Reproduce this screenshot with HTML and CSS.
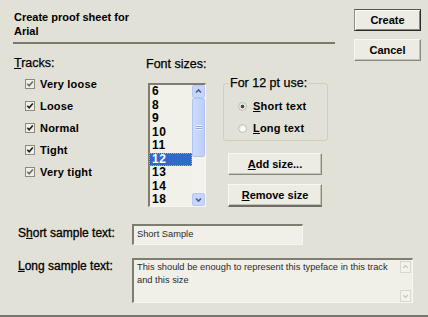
FILE: index.html
```html
<!DOCTYPE html>
<html>
<head>
<meta charset="utf-8">
<link rel="stylesheet" href="styles.css">
</head>
<body>
<div class="dialog">
  <div class="top">
    <div class="title-area">
      <div class="title">Create proof sheet for</div>
      <div class="title">Arial</div>
      <div class="sep"></div>
    </div>
    <div class="buttons">
      <button class="btn default">Create</button>
      <button class="btn">Cancel</button>
    </div>
  </div>

  <div class="main">
    <div class="col tracks">
      <div class="label"><u>T</u>racks:</div>
      <div class="checks">
        <div class="check"><span class="box light"><svg viewBox="0 0 8 8"><polyline points="1.3,3.8 3.2,5.8 6.8,1.6"/></svg></span>Very loose</div>
        <div class="check"><span class="box"><svg viewBox="0 0 8 8"><polyline points="1.3,3.8 3.2,5.8 6.8,1.6"/></svg></span>Loose</div>
        <div class="check"><span class="box"><svg viewBox="0 0 8 8"><polyline points="1.3,3.8 3.2,5.8 6.8,1.6"/></svg></span>Normal</div>
        <div class="check"><span class="box"><svg viewBox="0 0 8 8"><polyline points="1.3,3.8 3.2,5.8 6.8,1.6"/></svg></span>Tight</div>
        <div class="check"><span class="box light"><svg viewBox="0 0 8 8"><polyline points="1.3,3.8 3.2,5.8 6.8,1.6"/></svg></span>Very tight</div>
      </div>
    </div>

    <div class="col sizes">
      <div class="label">Font sizes:</div>
      <div class="listbox">
        <div class="items">
          <div class="item">6</div>
          <div class="item">8</div>
          <div class="item">9</div>
          <div class="item">10</div>
          <div class="item">11</div>
          <div class="item selected">12</div>
          <div class="item">13</div>
          <div class="item">14</div>
          <div class="item">18</div>
        </div>
        <div class="vscroll">
          <div class="sarrow"><svg viewBox="0 0 11 11"><polyline points="3,6.5 5.5,4 8,6.5"/></svg></div>
          <div class="thumb"><span class="grip"></span></div>
          <div class="track"></div>
          <div class="sarrow"><svg viewBox="0 0 11 11"><polyline points="3,4.5 5.5,7 8,4.5"/></svg></div>
        </div>
      </div>
    </div>

    <div class="col options">
      <fieldset class="group">
        <legend>For 12 pt use:</legend>
        <div class="radio-row"><span class="radio on"></span><span><u>S</u>hort text</span></div>
        <div class="radio-row"><span class="radio"></span><span><u>L</u>ong text</span></div>
      </fieldset>
      <button class="btn wide add"><u>A</u>dd size...</button>
      <button class="btn wide remove"><u>R</u>emove size</button>
    </div>
  </div>

  <div class="row short">
    <div class="row-label">S<u>h</u>ort sample text:</div>
    <div class="field input">Short Sample</div>
  </div>
  <div class="row long">
    <div class="row-label"><u>L</u>ong sample text:</div>
    <div class="field textarea">
      <div class="ta-text">This should be enough to represent this typeface in this track<br>and this size</div>
      <div class="ta-scroll">
        <div class="tarrow"><svg viewBox="0 0 10 12"><polyline points="2.5,7 5,4.5 7.5,7"/></svg></div>
        <div class="tarrow"><svg viewBox="0 0 10 12"><polyline points="2.5,5 5,7.5 7.5,5"/></svg></div>
      </div>
    </div>
  </div>
</div>
</body>
</html>
```

FILE: styles.css
```css
* { box-sizing: border-box; }
html, body {
  margin: 0;
  padding: 0;
}
body {
  width: 428px;
  height: 317px;
  overflow: hidden;
  background: #e2e1d8;
  font-family: "Liberation Sans", Arial, sans-serif;
  color: #000;
}
.dialog {
  width: 428px;
  height: 317px;
  border-bottom: 2px solid #76746a;
  background: #e2e1d8;
}

/* top */
.top {
  display: flex;
  height: 56px;
  padding: 9px 0 0 13px;
}
.title-area {
  width: 322px;
  padding-top: 1px;
}
.title {
  font-size: 11px;
  font-weight: bold;
  line-height: 14px;
  padding-left: 1px;
}
.sep {
  height: 2px;
  background: #7b796d;
  margin-top: 4px;
}
.buttons {
  margin-left: 19px;
  display: flex;
  flex-direction: column;
  gap: 8px;
}
.btn {
  font-family: "Liberation Sans", Arial, sans-serif;
  font-size: 11px;
  font-weight: bold;
  color: #000;
  background: #ecebe4;
  border: 1px solid;
  border-color: #f8f8f3 #8a887d #8a887d #f8f8f3;
  box-shadow: inset -1px -1px 0 #c4c3b8;
  padding: 0;
  width: 67px;
  height: 23px;
  text-align: center;
  line-height: 20px;
}
.btn.default {
  border-color: #55534c #2a2a2a #2a2a2a #8d8b80;
  box-shadow: inset 1px 1px 0 #fbfbf7, inset -1px -1px 0 #8a887d;
}
.btn u { text-decoration: underline; }

/* main */
.main {
  display: flex;
  height: 152px;
  padding-left: 14px;
}
.col { display: flex; flex-direction: column; }
.tracks { width: 132px; }
.sizes { width: 77px; }
.options { width: 105px; }

.label {
  font-size: 12.5px;
  line-height: 15px;
  -webkit-text-stroke: 0.25px #000;
}
.label u { text-decoration: underline; }

.checks {
  margin-top: 2px;
  padding-left: 11px;
}
.check {
  display: flex;
  align-items: center;
  height: 22px;
  font-size: 11px;
  font-weight: bold;
  letter-spacing: 0.2px;
}
.box {
  width: 10px;
  height: 10px;
  border: 1px solid #8c8a7f;
  background: #efeee7;
  margin-right: 5px;
  display: flex;
  align-items: center;
  justify-content: center;
}
.box svg {
  width: 8px;
  height: 8px;
  fill: none;
  stroke: #1e1e1e;
  stroke-width: 1.6;
}
.box.light svg { stroke: #6a6a64; }

/* font sizes list */
.sizes .label { margin-top: 1px; }
.listbox {
  margin-top: 11px;
  margin-left: 2px;
  width: 58px;
  height: 124px;
  display: flex;
  border-style: solid;
  border-width: 2px 1px 1px 2px;
  border-color: #7f7d71 #f6f5f0 #f6f5f0 #7f7d71;
  background: #f1f0e9;
}
.items {
  width: 42px;
}
.item {
  height: 13.5px;
  line-height: 13.5px;
  font-size: 12px;
  font-weight: bold;
  padding-left: 2px;
  letter-spacing: 0.5px;
}
.item.selected {
  background: #316ac5;
  color: #fff;
  outline: 1px dotted #e8a23a;
  outline-offset: -1px;
  margin-left: -1px;
  padding-left: 3px;
}
.vscroll {
  width: 13px;
  display: flex;
  flex-direction: column;
  background: #f3f2ec;
}
.sarrow {
  height: 13px;
  background: #c6d5fb;
  border: 1px solid #b5c7f3;
  border-radius: 2px;
  display: flex;
  align-items: center;
  justify-content: center;
}
.sarrow svg {
  width: 11px;
  height: 11px;
  fill: none;
  stroke: #4d6185;
  stroke-width: 1.6;
}
.thumb {
  height: 59px;
  background: linear-gradient(to right, #cddbfd, #bccffa);
  border: 1px solid #b0c3f2;
  border-radius: 2px;
  display: flex;
  align-items: center;
  justify-content: center;
}
.grip {
  width: 6px;
  height: 5px;
  background: repeating-linear-gradient(to bottom, #eef3ff 0 1px, #8ea4d8 1px 2px);
}
.track { flex: 1; }

/* options group */
.group {
  margin: 20px 0 0 0;
  padding: 4px 0 2px 0;
  border: 1px solid #cfcec2;
  border-radius: 3px;
  width: 105px;
  height: 65px;
}
.group legend {
  font-size: 12.5px;
  line-height: 15px;
  padding: 0 1px;
  margin-left: 5px;
  -webkit-text-stroke: 0.25px #000;
}
.radio-row {
  display: flex;
  align-items: center;
  height: 22px;
  padding-left: 14px;
  font-size: 11px;
  font-weight: bold;
  letter-spacing: 0.2px;
}
.radio-row u { text-decoration: underline; }
.radio {
  width: 9px;
  height: 9px;
  border-radius: 50%;
  border: 1px solid #c4c3b8;
  background: radial-gradient(circle at 60% 60%, #fbfbf8 0 2px, #dcdbd1 5px);
  margin-right: 6px;
}
.radio.on {
  background: radial-gradient(circle at 50% 50%, #4a4a46 0 1.6px, #ecebe4 2.2px, #d7d6cb 5px);
}
.wide {
  width: 94px;
  height: 22px;
  margin-left: 5px;
}
.add { margin-top: 12px; }
.remove {
  margin-top: 9px;
  height: 23px;
  border-bottom: 2px solid #6f6d63;
}

/* sample rows */
.row {
  display: flex;
  padding-left: 18px;
}
.short { margin-top: 16px; }
.long { margin-top: 13px; }
.row-label {
  width: 114px;
  font-size: 12px;
  line-height: 15px;
  margin-top: 2px;
  -webkit-text-stroke: 0.3px #000;
}
.long .row-label { margin-top: 1px; }
.row-label u { text-decoration: underline; }
.field {
  background: #f0efe8;
  border-style: solid;
  border-width: 2px 1px 1px 2px;
  border-color: #7f7d71 #f6f5f0 #f6f5f0 #7f7d71;
  font-size: 9.3px;
  color: #2b2b2b;
}
.input {
  width: 171px;
  height: 21px;
  padding: 2px 0 0 3px;
  line-height: 13px;
}
.textarea {
  width: 281px;
  height: 45px;
  display: flex;
}
.ta-text {
  flex: 1;
  padding: 1px 0 0 3px;
  line-height: 13px;
}
.ta-scroll {
  width: 11px;
  margin-right: 1px;
  display: flex;
  flex-direction: column;
  justify-content: space-between;
  padding: 1px 0 0 0;
}
.tarrow {
  width: 11px;
  height: 12px;
  border: 1px solid #d9d8ce;
  background: #f3f2ed;
  display: flex;
  align-items: center;
  justify-content: center;
}
.tarrow svg {
  width: 10px;
  height: 12px;
  fill: none;
  stroke: #c5c4b8;
  stroke-width: 1.4;
}
```
